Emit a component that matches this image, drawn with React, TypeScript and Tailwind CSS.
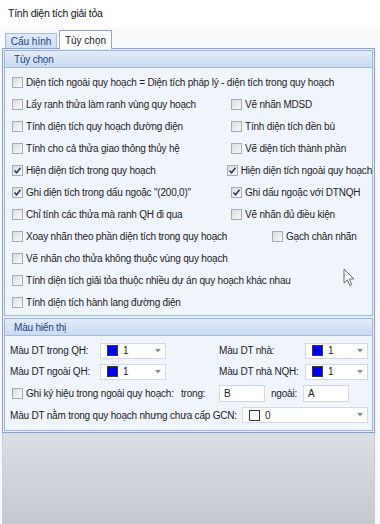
import React from 'react';

type Opt = { label: string; checked?: boolean };

const Check: React.FC<{ checked?: boolean }> = ({ checked }) => (
    <span className="w-[11px] h-[11px] shrink-0 border border-[#a7abb2] bg-gradient-to-br from-[#d9dcdf] to-[#f8f9fa] flex items-center justify-center">
        {checked && (
            <svg width="9" height="9" viewBox="0 0 9 9">
                <path d="M1.5 4.5 L3.6 6.8 L7.5 1.8" fill="none" stroke="#22315a" strokeWidth="1.4" />
            </svg>
        )}
    </span>
);

const CheckItem: React.FC<Opt & { className?: string }> = ({ label, checked, className }) => (
    <div className={`flex items-center gap-[3px] whitespace-nowrap ${className || ''}`}>
        <Check checked={checked} />
        <span>{label}</span>
    </div>
);

const Swatch: React.FC<{ color: string }> = ({ color }) => (
    <span className="w-[11px] h-[11px] border border-[#3a3a3a] shrink-0" style={{ backgroundColor: color }} />
);

const ColorSelect: React.FC<{ color: string; value: string; className: string }> = ({ color, value, className }) => (
    <div className={`h-[16px] shrink-0 bg-white border border-[#d4d9e1] flex items-center pl-[6px] pr-[4px] ${className}`}>
        <Swatch color={color} />
        <span className="ml-[5px] flex-1">{value}</span>
        <svg width="6" height="4" viewBox="0 0 6 4">
            <path d="M0 0 L6 0 L3 3.5 Z" fill="#8b8f96" />
        </svg>
    </div>
);

const GroupHeader: React.FC<{ title: string }> = ({ title }) => (
    <div className="h-[17px] flex items-center pl-[9px] bg-gradient-to-b from-[#e3ecf9] to-[#c9daf1] border-b border-[#a3bbdc] text-[#1d3f7c]">
        {title}
    </div>
);

const rows: { left: Opt; right?: Opt; rightWide?: boolean }[] = [
    { left: { label: 'Lấy ranh thửa làm ranh vùng quy hoạch' }, right: { label: 'Vẽ nhãn MDSD' } },
    { left: { label: 'Tính diện tích quy hoạch đường điện' }, right: { label: 'Tính diện tích đền bù' } },
    { left: { label: 'Tính cho cả thửa giao thông thủy hệ' }, right: { label: 'Vẽ diện tích thành phần' } },
    { left: { label: 'Hiện diện tích trong quy hoạch', checked: true }, right: { label: 'Hiện diện tích ngoài quy hoạch', checked: true } },
    { left: { label: 'Ghi diện tích trong dấu ngoặc "(200,0)"', checked: true }, right: { label: 'Ghi dấu ngoặc với DTNQH', checked: true } },
    { left: { label: 'Chỉ tính các thửa mà ranh QH đi qua' }, right: { label: 'Vẽ nhãn đủ điều kiện' } },
    { left: { label: 'Xoay nhãn theo phần diện tích trong quy hoạch' }, right: { label: 'Gạch chân nhãn' }, rightWide: true },
    { left: { label: 'Vẽ nhãn cho thửa không thuộc vùng quy hoạch' } },
    { left: { label: 'Tính diện tích giải tỏa thuộc nhiều dự án quy hoạch khác nhau' } },
    { left: { label: 'Tính diện tích hành lang đường điện' } },
];

const App: React.FC = () => {
    return (
        <div
            className="relative w-[380px] h-[524px] overflow-hidden bg-[#f6f7f9] flex flex-col text-[10px] tracking-[-0.2px] text-[#1c1c1c] whitespace-nowrap"
            style={{ fontFamily: '"Liberation Sans", Arial, sans-serif' }}
        >
            {/* Title bar */}
            <div className="h-[28px] bg-white flex items-center pl-[8px] text-[10.5px] tracking-[-0.25px] text-[#111]">
                Tính diện tích giải tỏa
            </div>

            {/* Tabs */}
            <div className="h-[20px] flex items-end pl-[5px] gap-[2px] bg-[#f9fafb] text-[10px] tracking-normal">
                <div className="h-[15px] w-[52px] flex items-center justify-center border border-b-0 border-[#a9bdd9] bg-gradient-to-b from-[#e2ebf7] to-[#cedcf0] text-[#23467f]">
                    Cấu hình
                </div>
                <div className="h-[19px] w-[53px] flex items-center justify-center border border-b-0 border-[#8fa6c8] bg-white -mb-px z-10">
                    Tùy chọn
                </div>
            </div>

            {/* Panel */}
            <div className="ml-[2px] w-[373px] border border-[#8ca3c5] bg-[#e6edf7] flex flex-col">
                {/* Tùy chọn group */}
                <div className="mx-[1px] mt-[1px] border border-[#9fb6d8] overflow-hidden">
                    <GroupHeader title="Tùy chọn" />
                    <div className="bg-[#f0f5fc] pl-[7px] pt-[3px] pb-[2px]">
                        <CheckItem label="Diện tích ngoài quy hoạch = Diện tích pháp lý - diện tích trong quy hoạch" className="h-[22px]" />
                        {rows.map((r, i) => (
                            <div key={i} className="flex items-center h-[22px]">
                                <CheckItem label={r.left.label} checked={r.left.checked} className="w-[219px]" />
                                {r.right && (
                                    <CheckItem
                                        label={r.right.label}
                                        checked={r.right.checked}
                                        className={r.rightWide ? 'ml-[41px]' : ''}
                                    />
                                )}
                            </div>
                        ))}
                    </div>
                </div>

                {/* Màu hiển thị group */}
                <div className="mx-[1px] mt-[2px] mb-[1px] border border-[#9fb6d8] overflow-hidden">
                    <GroupHeader title="Màu hiển thị" />
                    <div className="bg-[#f0f5fc] pl-[5px] pt-[4px] pb-[4px]">
                        <div className="h-[21px] flex items-center">
                            <span className="w-[90px]">Màu DT trong QH:</span>
                            <ColorSelect color="#0000ee" value="1" className="w-[66px]" />
                            <span className="ml-[53px] w-[86px]">Màu DT nhà:</span>
                            <ColorSelect color="#0000ee" value="1" className="w-[63px]" />
                        </div>
                        <div className="h-[21px] flex items-center">
                            <span className="w-[90px]">Màu DT ngoài QH:</span>
                            <ColorSelect color="#0000ee" value="1" className="w-[66px]" />
                            <span className="ml-[53px] w-[86px]">Màu DT nhà NQH:</span>
                            <ColorSelect color="#0000ee" value="1" className="w-[63px]" />
                        </div>
                        <div className="h-[22px] flex items-center pl-[2px]">
                            <CheckItem label="Ghi ký hiệu trong ngoài quy hoạch:" className="w-[169px] shrink-0" />
                            <span className="w-[38px] shrink-0">trong:</span>
                            <div className="w-[46px] h-[17px] shrink-0 bg-white border border-[#d4d9e1] flex items-center pl-[4px]">B</div>
                            <span className="ml-[6px] w-[32px] shrink-0">ngoài:</span>
                            <div className="w-[46px] h-[17px] shrink-0 bg-white border border-[#d4d9e1] flex items-center pl-[4px]">A</div>
                        </div>
                        <div className="h-[22px] flex items-center">
                            <span className="w-[232px] shrink-0">Màu DT nằm trong quy hoạch nhưng chưa cấp GCN:</span>
                            <ColorSelect color="#ffffff" value="0" className="w-[126px]" />
                        </div>
                    </div>
                </div>
            </div>

            {/* Bottom area */}
            <div className="flex-1 ml-[2px] w-[373px] bg-gradient-to-b from-[#dadfe7] to-[#c4c8cf] border-l border-r border-[#c9ced6]" />

            {/* Mouse cursor */}
            <svg className="absolute left-[343px] top-[268px]" width="12" height="19" viewBox="0 0 12 19">
                <path d="M1 1 L1 15 L4.3 11.8 L6.8 17.5 L8.8 16.6 L6.4 11 L11 11 Z" fill="#ffffff" stroke="#6b6f78" strokeWidth="1" strokeLinejoin="round" />
            </svg>
        </div>
    );
};

export default App;
